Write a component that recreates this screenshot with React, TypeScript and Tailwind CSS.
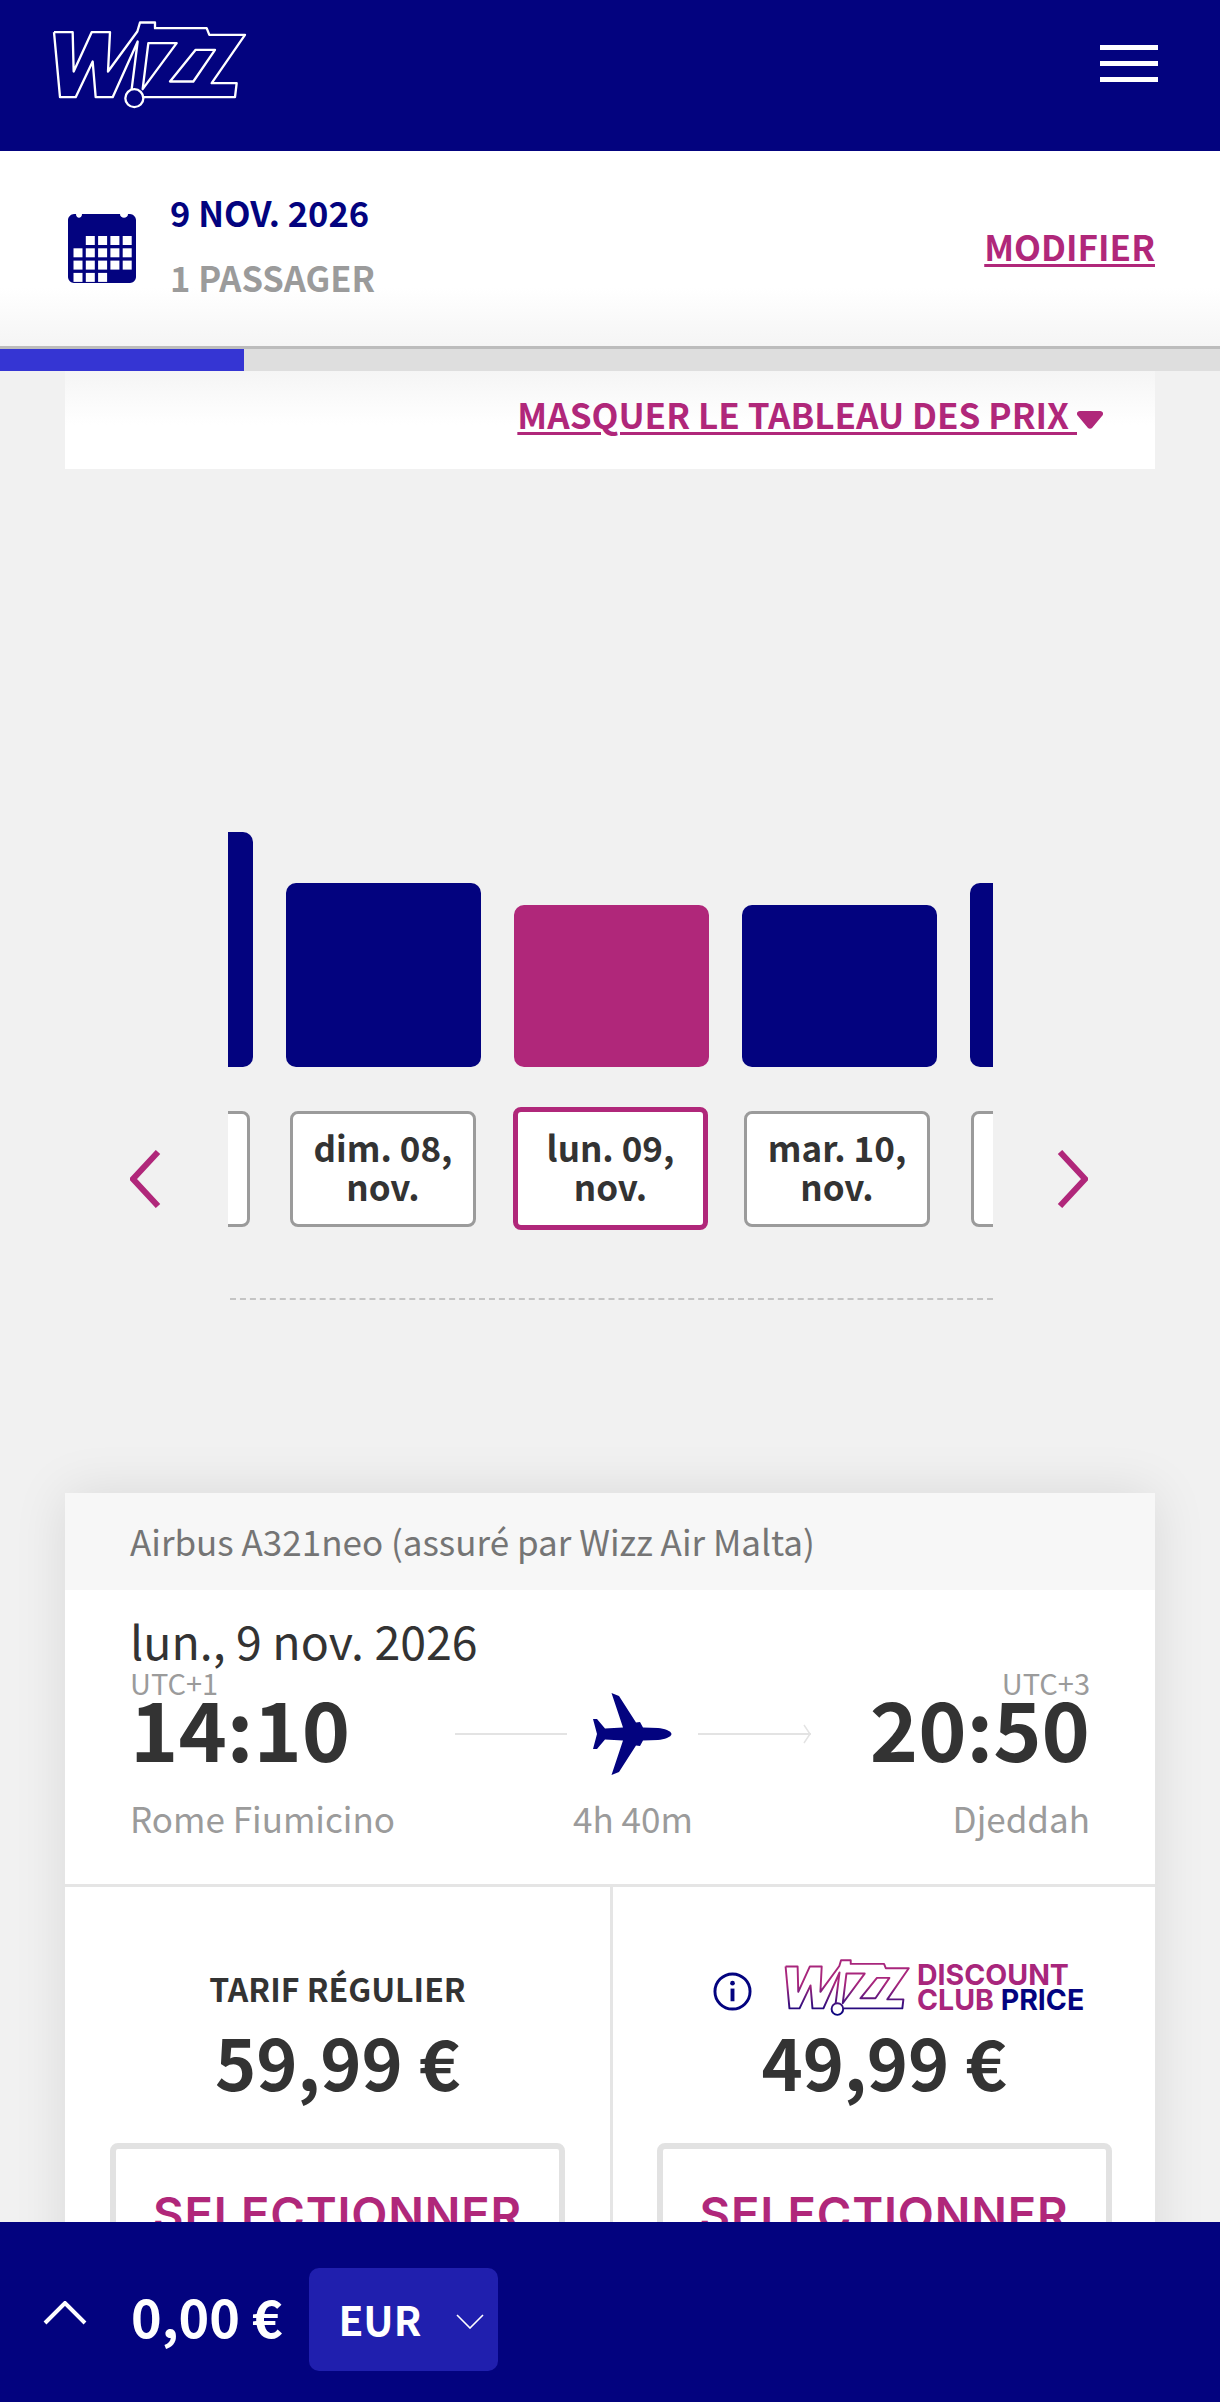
import React from "react";

const NAVY = "#03037f";

function WizzLogo({ className, stroke, sw = 7, gradient }: { className: string; stroke: string; sw?: number; gradient?: boolean }) {
  return (
    <svg viewBox="60 55 600 275" className={className} fill="none" stroke={gradient ? "url(#wizzGrad)" : stroke} strokeWidth={sw} strokeLinejoin="round">
      {gradient ? (
        <defs>
          <linearGradient id="wizzGrad" gradientUnits="userSpaceOnUse" x1="60" y1="60" x2="60" y2="325">
            <stop offset="0.45" stopColor={stroke} />
            <stop offset="1" stopColor={NAVY} />
          </linearGradient>
        </defs>
      ) : null}
      <path d="M72 97H128L131 215L185 97H240L234 215L322 95L330 68H375V85H530L538 105H645L545 250H620L615 292H341" />
      <path d="M72 97L90 292H137L188 185L197 292H248L323 125L305 268" />
      <path d="M338 268L355 130H440L338 268Z" />
      <path d="M497 150H555L490 245H420Z" />
      <circle cx="313" cy="295" r="27" />
    </svg>
  );
}

function Calendar() {
  const cells: [number, number][] = [];
  for (let r = 0; r < 4; r++) {
    for (let c = 0; c < 5; c++) {
      if ((r === 0 && c === 0) || (r === 3 && c > 2)) continue;
      cells.push([c, r]);
    }
  }
  return (
    <svg viewBox="0 0 68 69" className="w-[68px] h-[69px] shrink-0">
      <path
        d="M6 0H8C8 5 14 5 14 0H52C52 5 60 5 60 0H62C65 0 68 3 68 6V63C68 66 65 69 62 69H6C3 69 0 66 0 63V6C0 3 3 0 6 0Z"
        fill={NAVY}
      />
      {cells.map(([c, r]) => (
        <rect key={`${c}-${r}`} x={5.5 + c * 12.3} y={22 + r * 12.3} width="9" height="9" fill="#fff" />
      ))}
    </svg>
  );
}

function Plane() {
  return (
    <svg viewBox="0 0 80 82" className="w-[80px] h-[82px] shrink-0">
      <path
        d="M79.5 41C79.5 38 72 35.5 66 35L51 34.5L48 29L44 29.5L27 3L19.5 0L31 34.5L13 35.5L5 26H1L5 41L1 56H5L13 46.5L31 47.5L19.5 82L27 79L44 52.5L48 53L51 47.5L66 47C72 46.5 79.5 44 79.5 41Z"
        fill={NAVY}
      />
    </svg>
  );
}

function Chevron({ dir, className, color, sw }: { dir: "l" | "r" | "u" | "d"; className: string; color: string; sw: number }) {
  const d = { l: "M28 2L3 29L28 56", r: "M3 2L28 29L3 56", u: "M2 22L22 2L42 22", d: "M1 1L14 14L27 1" }[dir];
  const vb = { l: "0 0 31 58", r: "0 0 31 58", u: "0 0 44 24", d: "0 0 28 15" }[dir];
  return (
    <svg viewBox={vb} className={className} fill="none" stroke={color} strokeWidth={sw}>
      <path d={d} />
    </svg>
  );
}

function DatePill({ a, selected, className = "" }: { a?: string; selected?: boolean; className?: string }) {
  return (
    <div
      className={`shrink-0 flex items-center justify-center text-center bg-white font-bold text-[#333] text-[35px] leading-[39px] rounded-[8px] ${
        selected ? "w-[195px] h-[123px] border-[5px] border-[#b0277a]" : "w-[186px] h-[116px] border-[3px] border-[#9b9b9b]"
      } ${className}`}
    >
      {a ? (
        <span className="pb-[6px]">
          {a}
          <br />
          nov.
        </span>
      ) : null}
    </div>
  );
}

export default function App() {
  return (
    <div
      className="relative w-[1220px] h-[2402px] overflow-hidden bg-[#f1f1f1]"
      style={{ fontFamily: '"Noto Sans CJK JP", "Noto Sans", sans-serif' }}
    >
      {/* Top bar */}
      <header className="h-[151px] bg-[#03037f] flex items-start justify-between pl-[50px] pr-[62px]">
        <WizzLogo className="w-[200px] h-[92px] mt-[18px]" stroke="#fff" />
        <div className="mt-[45px] w-[58px] flex flex-col gap-[11px]">
          <div className="h-[5px] bg-white" />
          <div className="h-[5px] bg-white" />
          <div className="h-[5px] bg-white" />
        </div>
      </header>

      {/* Summary */}
      <section className="h-[198px] border-b-[3px] border-[#bcbcbc] bg-gradient-to-b from-white from-[70%] to-[#f5f5f5] flex items-center justify-between pl-[68px] pr-[65px]">
        <div className="flex items-center">
          <Calendar />
          <div className="ml-[34px] font-bold text-[34.5px] -mt-[7px]">
            <div className="text-[#03037f] leading-[65px]">9 NOV. 2026</div>
            <div className="text-[#9b9b9b] leading-[65px]">1 PASSAGER</div>
          </div>
        </div>
        <a className="font-bold text-[35px] leading-[40px] text-[#b0277a] underline underline-offset-[3px] decoration-[3px] -mt-[6px]">MODIFIER</a>
      </section>

      {/* Progress */}
      <div className="h-[22px] bg-[#dedede]">
        <div className="h-full w-[244px] bg-[#3535d3]" />
      </div>

      {/* Toggle */}
      <div className="mx-[65px] h-[98px] bg-gradient-to-b from-[#f5f5f5] to-white to-[55%] flex items-start justify-end pr-[52px] pt-[21px]">
        <a className="font-bold text-[35px] leading-[44px] text-[#b0277a] underline underline-offset-[3px] decoration-[3px] whitespace-pre">MASQUER LE TABLEAU DES PRIX </a>
        <svg viewBox="0 0 26 18" className="w-[26px] h-[18px] mt-[19px]">
          <path d="M3 0H23C26 0 27 3 25 5L15 17C14 18 12 18 11 17L1 5C-1 3 0 0 3 0Z" fill="#b0277a" />
        </svg>
      </div>

      {/* Chart */}
      <div className="mt-[363px] flex items-end h-[235px] w-[765px] ml-[228px] overflow-hidden gap-[33px]">
        <div className="shrink-0 w-[195px] -ml-[170px] h-[235px] bg-[#03037f] rounded-[10px]" />
        <div className="shrink-0 w-[195px] h-[184px] bg-[#03037f] rounded-[10px]" />
        <div className="shrink-0 w-[195px] h-[162px] bg-[#b0277a] rounded-[10px]" />
        <div className="shrink-0 w-[195px] h-[162px] bg-[#03037f] rounded-[10px]" />
        <div className="shrink-0 w-[195px] h-[184px] bg-[#03037f] rounded-[10px]" />
      </div>

      {/* Dates */}
      <div className="mt-[40px] flex items-center h-[123px] ml-[130px]">
        <Chevron dir="l" className="w-[31px] h-[58px] shrink-0 mt-[20px]" color="#b0277a" sw={6} />
        <div className="ml-[67px] w-[765px] overflow-hidden flex items-center h-[123px]">
          <DatePill className="-ml-[164px]" />
          <DatePill a="dim. 08," className="ml-[40px]" />
          <DatePill a="lun. 09," selected className="ml-[37px]" />
          <DatePill a="mar. 10," className="ml-[36px]" />
          <DatePill className="ml-[41px]" />
        </div>
        <Chevron dir="r" className="w-[31px] h-[58px] shrink-0 ml-[64px] mt-[20px]" color="#b0277a" sw={6} />
      </div>

      <div className="mt-[68px] ml-[230px] w-[763px] border-t-[2px] border-dashed border-[#c4c4c4]" />

      {/* Flight card */}
      <div className="mt-[193px] mx-[65px] bg-white shadow-[0_0_50px_rgba(0,0,0,0.1)]">
        <div className="h-[97px] bg-[#f7f7f7] flex items-center pl-[65px] text-[#757575] text-[35px] font-normal">
          Airbus A321neo (assuré par Wizz Air Malta)
        </div>
        <div className="h-[297px] px-[65px] border-b-[3px] border-[#e5e5e5]">
          <div className="pt-[19px] text-[46.5px] leading-[62px] text-[#333] font-normal">lun., 9 nov. 2026</div>
          <div className="flex items-start -mt-[2px]">
            <div className="w-[290px]">
              <div className="mt-[7px] text-[29px] leading-[12px] text-[#9b9b9b] font-normal">UTC+1</div>
              <div className="text-[82px] leading-[78px] font-bold text-[#333]">14:10</div>
              <div className="mt-[30px] text-[35px] leading-[44px] text-[#9b9b9b] font-normal">Rome Fiumicino</div>
            </div>
            <div className="w-[356px] ml-[35px] flex flex-col items-center">
              <div className="flex items-center h-[102px] mt-[14px] w-full">
                <div className="w-[112px] h-[2px] bg-[#e3e3e3]" />
                <div className="ml-[25px]"><Plane /></div>
                <div className="ml-[26px] relative w-[113px] h-[2px] bg-[#e3e3e3]">
                  <span className="absolute right-0 -top-[9px] w-[20px] h-[20px] flex">
                    <svg viewBox="0 0 20 20" fill="none" stroke="#e3e3e3" strokeWidth="1.5" className="w-[20px] h-[20px]"><path d="M13 1L19 10L13 19" /></svg>
                  </span>
                </div>
              </div>
              <div className="mt-[11px] text-[35px] leading-[44px] text-[#9b9b9b] font-normal">4h 40m</div>
            </div>
            <div className="w-[279px] text-right">
              <div className="mt-[7px] text-[29px] leading-[12px] text-[#9b9b9b] font-normal">UTC+3</div>
              <div className="text-[82px] leading-[78px] font-bold text-[#333]">20:50</div>
              <div className="mt-[30px] text-[35px] leading-[44px] text-[#9b9b9b] font-normal">Djeddah</div>
            </div>
          </div>
        </div>
        <div className="grid grid-cols-[548px_1fr]">
          <div className="h-[500px] border-r-[3px] border-[#e5e5e5] flex flex-col items-center">
            <div className="h-[136px] flex items-end pb-[15px] font-bold text-[32px] leading-[40px] text-[#333]">TARIF RÉGULIER</div>
            <div className="text-[70px] leading-[84px] font-bold text-[#333] -mt-[4px]">59,99 €</div>
            <div className="mt-[40px] w-[455px] h-[200px] rounded-[8px] border-[6px] border-[#e2e2e2] flex justify-center pt-[33px] text-[47px] leading-[64px] font-semibold tracking-[0.8px] text-[#b0277a]" style={{ fontFamily: "Inter, sans-serif" }}>
              SELECTIONNER
            </div>
          </div>
          <div className="h-[500px] flex flex-col items-center">
            <div className="h-[136px] w-full flex items-start pl-[100px] pt-[85px]">
              <svg viewBox="0 0 40 40" className="w-[39px] h-[39px] shrink-0" fill="none">
                <circle cx="20" cy="20" r="18" stroke={NAVY} strokeWidth="3" />
                <rect x="18" y="17" width="4" height="13" fill={NAVY} />
                <circle cx="20" cy="11.5" r="2.4" fill={NAVY} />
              </svg>
              <WizzLogo className="w-[129px] h-[60px] ml-[31px] -mt-[15px] shrink-0" stroke="#a8267c" sw={9} gradient />
              <div className="ml-[5px] -mt-[10px] font-bold text-[28.5px] leading-[25px] whitespace-nowrap text-[#a8267c]" style={{ fontFamily: "Inter, sans-serif" }}>
                <div>DISCOUNT</div>
                <div>
                  CLUB <span className="text-[#03037f]">PRICE</span>
                </div>
              </div>
            </div>
            <div className="text-[70px] leading-[84px] font-bold text-[#333] -mt-[4px]">49,99 €</div>
            <div className="mt-[40px] w-[455px] h-[200px] rounded-[8px] border-[6px] border-[#e2e2e2] flex justify-center pt-[33px] text-[47px] leading-[64px] font-semibold tracking-[0.8px] text-[#b0277a]" style={{ fontFamily: "Inter, sans-serif" }}>
              SELECTIONNER
            </div>
          </div>
        </div>
      </div>

      {/* Bottom bar */}
      <footer className="absolute left-0 right-0 bottom-0 h-[180px] bg-[#03037f] flex items-start text-white font-bold">
        <Chevron dir="u" className="w-[44px] h-[24px] ml-[43px] mt-[79px]" color="#fff" sw={4} />
        <div className="ml-[44px] mt-[62px] text-[52px] leading-[64px]">0,00 €</div>
        <div className="ml-[27px] mt-[46px] w-[189px] h-[103px] bg-[#201fae] rounded-[10px] flex items-center pl-[29px] text-[40.5px] relative">
          EUR
          <Chevron dir="d" className="w-[28px] h-[15px] absolute left-[147px] top-[46px]" color="#fff" sw={1.6} />
        </div>
      </footer>
    </div>
  );
}
